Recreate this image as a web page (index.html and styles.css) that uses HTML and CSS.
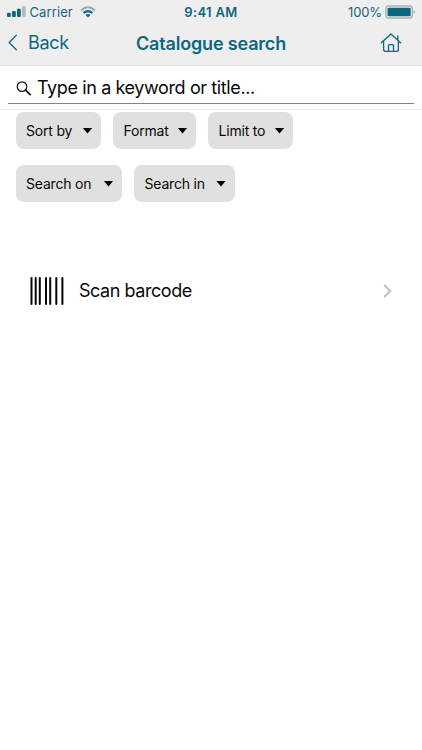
FILE: index.html
```html
<!DOCTYPE html>
<html lang="en">
<head>
<meta charset="utf-8">
<title>Catalogue search</title>
<link rel="stylesheet" href="styles.css">
</head>
<body>
<header class="top">
  <div class="status">
    <div class="status-left">
      <svg class="signal" width="19" height="12" viewBox="0 0 19 12"><rect x="0" y="6.8" width="3.8" height="4.2" rx="1"/><rect x="5" y="5" width="3.8" height="6" rx="1"/><rect x="10" y="2.8" width="3.8" height="8.2" rx="1"/><rect class="muted" x="15" y="0.3" width="3.6" height="10.7" rx="1"/></svg>
      <span class="carrier">Carrier</span>
      <svg class="wifi" width="16" height="12" viewBox="0 0 16 12"><path class="wifi-out" d="M1 4.4Q8-1.8 15 4.4"/><path class="wifi-mid" d="M3.5 7.1Q8 3.2 12.5 7.1"/><path d="M5.5 8.9Q8 7 10.5 8.9L8 11.5Z"/></svg>
    </div>
    <span class="time">9:41 AM</span>
    <div class="status-right">
      <span class="percent">100%</span>
      <svg class="battery" width="31" height="14" viewBox="0 0 31 14"><rect class="case" x="0.8" y="1" width="26.6" height="12" rx="2.8"/><rect x="2.5" y="2.8" width="23.2" height="8.4" rx="1"/><path class="muted" d="M28.6 5Q30.2 5.4 30.2 7T28.6 9Z"/></svg>
    </div>
  </div>
  <nav class="nav">
    <a class="back"><svg width="10" height="18" viewBox="0 0 10 18"><path d="M8.3 1.2L1.2 8.5l7.1 7.3"/></svg><span>Back</span></a>
    <h1 class="title">Catalogue search</h1>
    <svg class="home" width="22" height="20" viewBox="0 0 22 20"><path d="M1.4 9.7L11 0.9L20.6 9.7M3.6 8V16.3Q3.6 18.4 5.7 18.4H16.3Q18.4 18.4 18.4 16.3V8M17.8 6.8V2.8M8.5 18.2V12.7Q8.5 11.7 9.5 11.7H12.5Q13.5 11.7 13.5 12.7V18.2"/></svg>
  </nav>
</header>
<main>
  <div class="search-wrap">
    <div class="search">
      <svg width="16" height="16" viewBox="0 0 16 16"><circle cx="6" cy="6.6" r="4.8"/><path class="handle" d="M9.6 10.2L14.2 14.6"/></svg>
      <span>Type in a keyword or title...</span>
    </div>
  </div>
  <div class="filters">
    <div class="row">
      <button class="pill sort"><span>Sort by</span><i></i></button>
      <button class="pill format"><span>Format</span><i></i></button>
      <button class="pill limit"><span>Limit to</span><i></i></button>
    </div>
    <div class="row">
      <button class="pill on"><span>Search on</span><i></i></button>
      <button class="pill in"><span>Search in</span><i></i></button>
    </div>
  </div>
  <a class="scan">
    <svg class="barcode" width="34" height="30" viewBox="0 0 34 30"><path d="M1.5 2V28M5.7 2V28M9.8 2V28M16 2V28M20.2 2V28M26.3 2V28M32.4 2V28"/></svg>
    <span>Scan barcode</span>
    <svg class="chevron" width="9" height="14" viewBox="0 0 9 14"><path d="M1.2 1L7.2 7L1.2 13"/></svg>
  </a>
</main>
</body>
</html>
```
FILE: styles.css
```css
* { box-sizing: border-box; }
body { margin: 0; width: 422px; height: 750px; overflow: hidden; background: #fff; color: #080808; font-family: Inter, "Liberation Sans", sans-serif; }
svg { display: block; flex: none; fill: none; }
span, h1 { white-space: nowrap; }
.top { height: 66px; background: #eee; border-bottom: 1px solid #e4e4e4; color: #0e6680; }
.status { height: 24px; display: grid; grid-template-columns: 1fr auto 1fr; align-items: center; font-size: 13px; line-height: 24px; }
.status svg { fill: #0e6680; }
.status .muted { fill: #b2b9bc; }
.status-left { display: flex; align-items: center; padding-left: 7px; }
.carrier { margin-left: 3.5px; width: 46px; letter-spacing: 0.1px; }
.wifi { margin-left: 4px; }
.wifi .wifi-out { fill: none; stroke: #93a8af; stroke-width: 2; }
.wifi .wifi-mid { fill: none; stroke: #0e6680; stroke-width: 2; }
.time { font-weight: 600; letter-spacing: 0.35px; }
.status-right { display: flex; align-items: center; justify-content: flex-end; padding-right: 6px; }
.percent { margin-right: 3px; letter-spacing: -0.1px; }
.status .case { fill: none; stroke: #a9b3b6; stroke-width: 1.4; }
.nav { height: 38px; display: grid; grid-template-columns: 1fr auto 1fr; align-items: center; }
.nav svg { stroke: #0e6680; stroke-width: 1.3; stroke-linecap: round; stroke-linejoin: round; }
.back { display: flex; align-items: center; gap: 10px; padding-left: 8px; font-size: 18px; letter-spacing: -0.3px; }
.back span { position: relative; top: -1px; }
.title { margin: 0; font-size: 18px; font-weight: 600; letter-spacing: -0.17px; }
.home { justify-self: end; margin-right: 20px; }
.search-wrap { height: 44px; padding: 0 8px; border-bottom: 1px solid #eaeaea; }
.search { height: 38px; display: flex; align-items: center; gap: 5px; padding: 6px 0 0 8px; border-bottom: 1px solid #7c8583; font-size: 18px; letter-spacing: -0.39px; }
.search svg { stroke: #111; stroke-width: 1.2; stroke-linecap: round; }
.search .handle { stroke-width: 1.8; }
.filters { padding: 2px 0 0 15.5px; display: grid; gap: 16px; }
.row { display: flex; gap: 12px; }
.pill { height: 37px; display: flex; align-items: center; justify-content: space-between; padding: 0 8.5px 0 10.5px; border: 0; border-radius: 8px; background: #e0e0e0; color: #080808; font-family: inherit; font-size: 14px; letter-spacing: -0.2px; }
.pill i { width: 10px; height: 6px; background: #000; clip-path: polygon(0 0, 100% 0, 50% 100%); }
.sort { width: 85.5px; }
.format { width: 83px; }
.limit { width: 85px; }
.on { width: 106.5px; }
.in { width: 100.5px; }
.scan { display: flex; align-items: center; height: 60px; margin-top: 58px; padding: 1px 30px 0; font-size: 18px; letter-spacing: -0.45px; }
.barcode { stroke: #050505; stroke-width: 2; stroke-linecap: round; }
.scan span { margin-left: 15px; flex: 1; }
.chevron { stroke: #bfbfc2; stroke-width: 2; position: relative; left: -0.5px; }
```
